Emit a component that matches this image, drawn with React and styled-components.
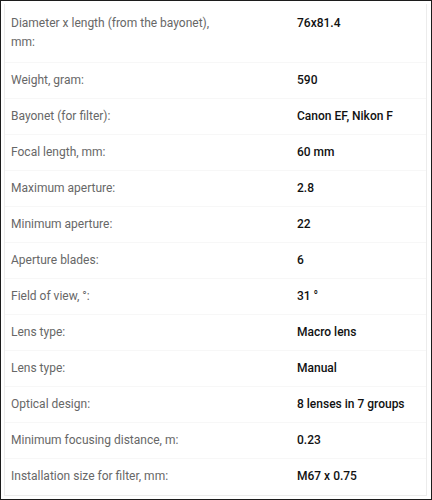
import React from "react";
import styled, { createGlobalStyle } from "styled-components";

const GlobalStyle = createGlobalStyle`
  html, body {
    margin: 0;
    padding: 0;
    background: #fff;
  }
  * { box-sizing: border-box; }
`;

const Frame = styled.div`
  width: 432px;
  height: 500px;
  border: 1px solid #1c1c1c;
  padding: 3px 4px 3px 3px;
  background: #fff;
  font-family: Roboto, "Liberation Sans", sans-serif;
`;

const Panel = styled.div`
  height: 100%;
  padding-top: 2px;
  border: 1px solid #ececec;
  border-top: none;
`;

const Row = styled.div`
  display: grid;
  grid-template-columns: 286px 1fr;
  padding: 8px 0 ${(p) => (p.tall ? "10px" : "8px")};
  border-bottom: 1px solid ${(p) => (p.last ? "transparent" : "#f7f7f7")};
  font-size: 12px;
  line-height: 19px;
`;

const Label = styled.div`
  color: #676767;
  padding-left: 6px;
  max-width: 212px;
`;

const Value = styled.div`
  color: #111;
  font-weight: 500;
  padding-left: 6px;
`;

const specs = [
  ["Diameter x length (from the bayonet), mm:", "76x81.4"],
  ["Weight, gram:", "590"],
  ["Bayonet (for filter):", "Canon EF, Nikon F"],
  ["Focal length, mm:", "60 mm"],
  ["Maximum aperture:", "2.8"],
  ["Minimum aperture:", "22"],
  ["Aperture blades:", "6"],
  ["Field of view, °:", "31 °"],
  ["Lens type:", "Macro lens"],
  ["Lens type:", "Manual"],
  ["Optical design:", "8 lenses in 7 groups"],
  ["Minimum focusing distance, m:", "0.23"],
  ["Installation size for filter, mm:", "M67 x 0.75"],
];

export default function App() {
  return (
    <>
      <GlobalStyle />
      <Frame>
        <Panel>
          {specs.map(([label, value], i) => (
            <Row key={i} tall={i === 0} last={i === specs.length - 1}>
              <Label>{label}</Label>
              <Value>{value}</Value>
            </Row>
          ))}
        </Panel>
      </Frame>
    </>
  );
}
